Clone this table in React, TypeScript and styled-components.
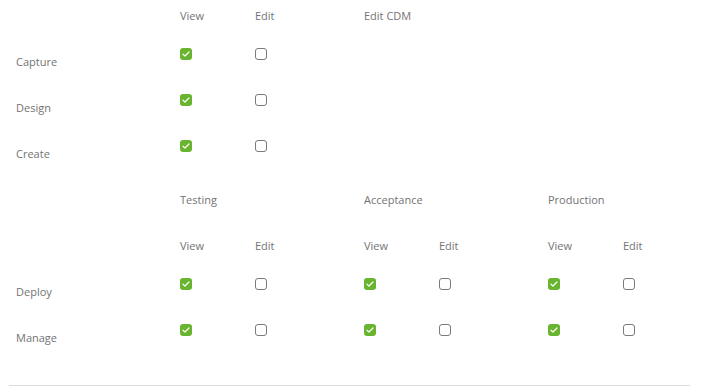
import React from 'react';
import styled, { createGlobalStyle } from 'styled-components';

const GlobalStyle = createGlobalStyle`
    html, body {
        margin: 0;
        padding: 0;
        background: #ffffff;
        overflow: hidden;
    }
    body {
        font-family: 'Open Sans', 'DejaVu Sans', sans-serif;
        font-size: 11px;
        color: #737373;
    }
`;

type Row = { label: string; checks: boolean[] };

const topColumns = ['View', 'Edit', 'Edit CDM'];
const topRows: Row[] = [
    { label: 'Capture', checks: [true, false] },
    { label: 'Design', checks: [true, false] },
    { label: 'Create', checks: [true, false] },
];

const envGroups = ['Testing', 'Acceptance', 'Production'];
const envRows: Row[] = [
    { label: 'Deploy', checks: [true, false, true, false, true, false] },
    { label: 'Manage', checks: [true, false, true, false, true, false] },
];

function Checkbox({ checked }: { checked: boolean }) {
    return (
        <StyledBox $checked={checked}>
            {checked && (
                <svg width="8" height="6" viewBox="0 0 8 6">
                    <path
                        d="M1 3.2 L3 5 L7 1"
                        fill="none"
                        stroke="#ffffff"
                        strokeWidth="1.2"
                        strokeLinecap="round"
                        strokeLinejoin="round"
                    />
                </svg>
            )}
        </StyledBox>
    );
}

function App() {
    return (
        <>
            <GlobalStyle />
            <StyledPage>
                <StyledSection>
                    <StyledHead />
                    {topColumns.map((c) => (
                        <StyledHead key={c}>{c}</StyledHead>
                    ))}
                    <StyledHead />
                    <StyledHead />
                    <StyledHead />
                    {topRows.map((r) => (
                        <React.Fragment key={r.label}>
                            <StyledLabel>{r.label}</StyledLabel>
                            {r.checks.map((c, i) => (
                                <StyledCheckCell key={i}>
                                    <Checkbox checked={c} />
                                </StyledCheckCell>
                            ))}
                            <StyledCheckCell />
                            <StyledCheckCell />
                            <StyledCheckCell />
                            <StyledCheckCell />
                        </React.Fragment>
                    ))}
                </StyledSection>

                <StyledSection>
                    <StyledLabel />
                    {envGroups.map((g) => (
                        <StyledGroupTitle key={g}>{g}</StyledGroupTitle>
                    ))}
                    <StyledLabel />
                    {envGroups.map((g) => (
                        <React.Fragment key={g}>
                            <StyledLabel>View</StyledLabel>
                            <StyledLabel>Edit</StyledLabel>
                        </React.Fragment>
                    ))}
                    {envRows.map((r) => (
                        <React.Fragment key={r.label}>
                            <StyledLabel>{r.label}</StyledLabel>
                            {r.checks.map((c, i) => (
                                <StyledCheckCell key={i}>
                                    <Checkbox checked={c} />
                                </StyledCheckCell>
                            ))}
                        </React.Fragment>
                    ))}
                </StyledSection>

                <StyledDivider />
            </StyledPage>
        </>
    );
}

export default App;

const StyledPage = styled.div`
    width: 701px;
    height: 392px;
    display: flex;
    flex-direction: column;
`;

const StyledSection = styled.div`
    display: grid;
    grid-template-columns: 164px 75px 109px 75px 109px 75px 1fr;
    grid-auto-rows: 46px;
    padding-left: 16px;

    &:first-child {
        grid-template-rows: 32px;
    }
`;

const StyledHead = styled.div`
    padding-top: 9px;
    line-height: 14px;
    white-space: nowrap;
`;

const StyledLabel = styled.div`
    padding-top: 23px;
    line-height: 14px;
    white-space: nowrap;
`;

const StyledGroupTitle = styled.div`
    grid-column: span 2;
    padding-top: 23px;
    line-height: 14px;
    white-space: nowrap;
`;

const StyledCheckCell = styled.div`
    padding-top: 16px;
`;

const StyledBox = styled.span<{ $checked: boolean }>`
    display: flex;
    align-items: center;
    justify-content: center;
    box-sizing: border-box;
    width: 12px;
    height: 12px;
    border-radius: 3px;
    background: ${({ $checked }) => ($checked ? '#69b42e' : '#ffffff')};
    border: ${({ $checked }) => ($checked ? 'none' : '1px solid #7a7a7a')};
`;

const StyledDivider = styled.div`
    margin: 31px 11px 0 9px;
    height: 1px;
    background: #dcdcdc;
`;
